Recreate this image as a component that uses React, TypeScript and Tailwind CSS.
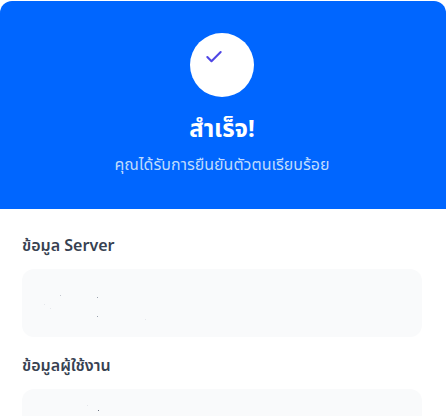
import { Check } from 'lucide-react';

const serverSpecks = [
  { x: 38, y: 26, fill: '#c4c8d0' },
  { x: 75, y: 28, fill: '#9ca3af' },
  { x: 75, y: 47, fill: '#9ca3af' },
  { x: 22, y: 35, fill: '#e5e7eb' },
  { x: 28, y: 39, fill: '#e5e7eb' },
  { x: 123, y: 50, fill: '#e5e7eb' },
];

const userSpecks = [
  { x: 76, y: 21, fill: '#6b7280' },
  { x: 65, y: 16, fill: '#e5e7eb' },
];

function InfoSection({ title, specks }: { title: string; specks: typeof serverSpecks }) {
  return (
    <section>
      <h2 className="text-base leading-6 font-semibold text-[#374151]">{title}</h2>
      <div className="mt-3 h-[68px] rounded-xl bg-[#f9fafb]">
        <svg className="block size-full">
          {specks.map((s) => (
            <rect key={`${s.x}-${s.y}`} x={s.x} y={s.y} width={1} height={1} fill={s.fill} />
          ))}
        </svg>
      </div>
    </section>
  );
}

export default function App() {
  return (
    <div className="h-[416px] overflow-hidden bg-white pt-px font-['Noto_Sans','Noto_Sans_Thai',sans-serif]">
      <header className="flex flex-col items-center rounded-t-xl bg-[#0066ff] pt-8 pr-[2px] pb-[34px]">
        <div className="mb-4 flex size-16 items-center justify-center rounded-full bg-white">
          <Check size={20} strokeWidth={2.5} className="mr-[16px] mb-[16px] text-[#4f46e5]" />
        </div>
        <h1 className="mb-[10px] text-2xl leading-[30px] font-bold text-white">สำเร็จ!</h1>
        <p className="text-base leading-[22px] text-[#bfdbfe]">คุณได้รับการยืนยันตัวตนเรียบร้อย</p>
      </header>
      <main className="flex flex-col gap-4 pt-6 pr-6 pl-[22px]">
        <InfoSection title="ข้อมูล Server" specks={serverSpecks} />
        <InfoSection title="ข้อมูลผู้ใช้งาน" specks={userSpecks} />
      </main>
    </div>
  );
}
